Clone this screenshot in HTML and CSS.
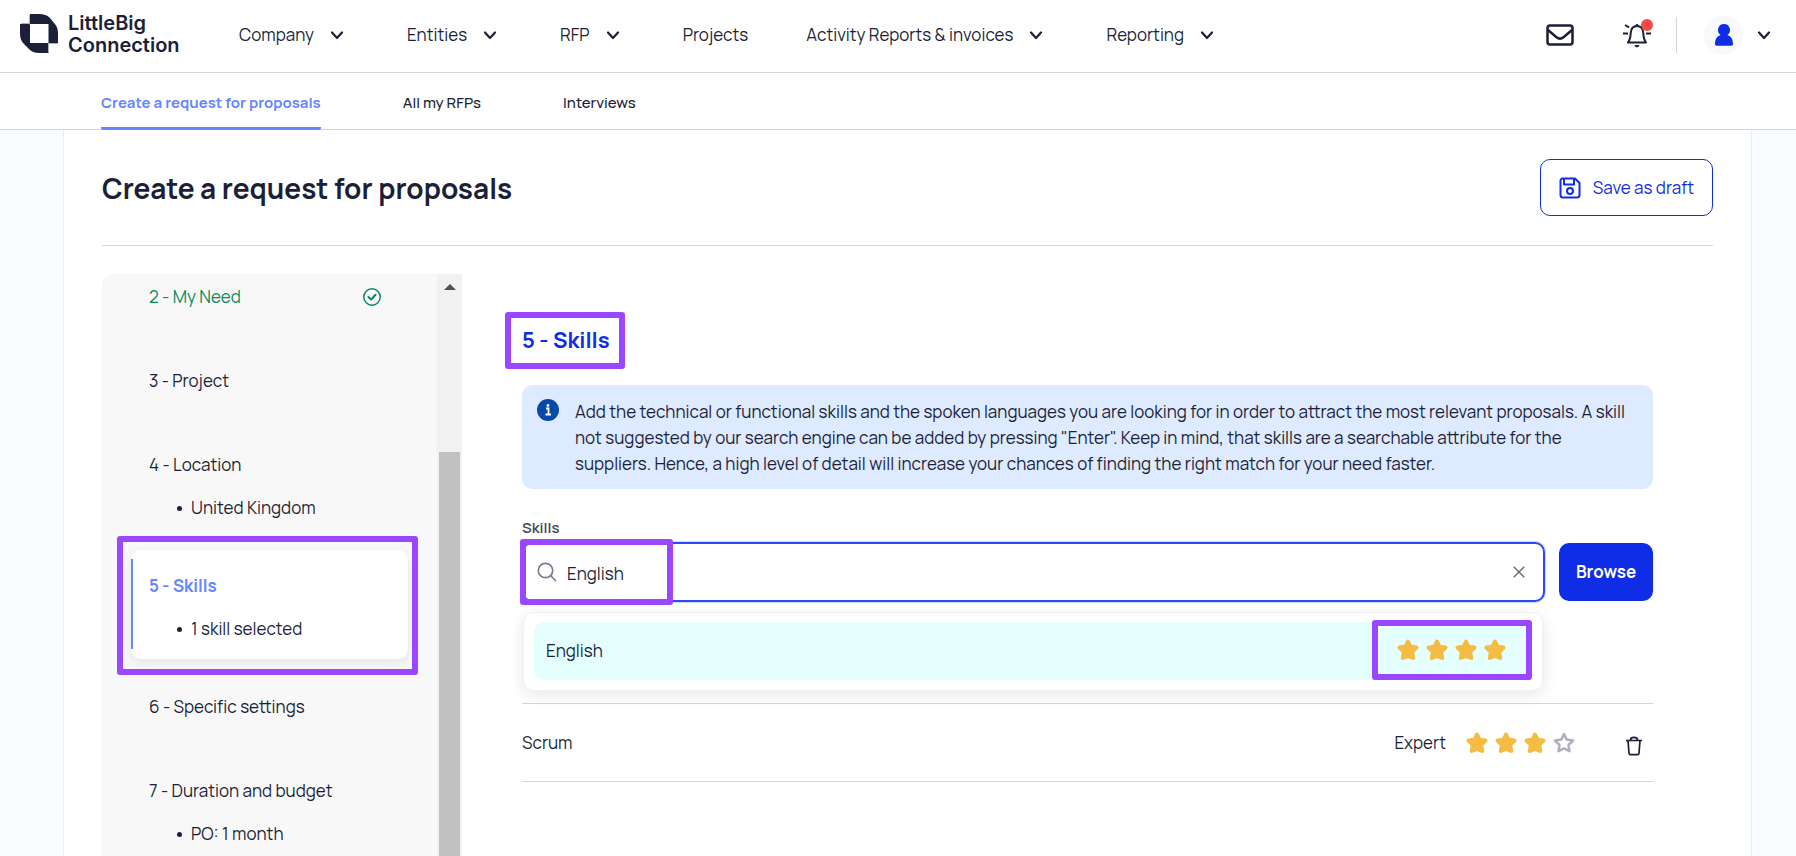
FILE: index.html
```html
<!DOCTYPE html>
<html lang="en">

<head>
    <meta charset="UTF-8">
    <meta name="viewport" content="width=device-width, initial-scale=1.0">
    <title>Create a request for proposals</title>
    <link rel="stylesheet" href="styles.css">
</head>

<body>
    <!-- Shared icons -->
    <svg class="sprite" aria-hidden="true">
        <symbol id="chevron" viewBox="0 0 24 24">
            <path d="M7 9.5l5 5.5 5-5.5" fill="none" stroke="currentColor" stroke-width="2.2" stroke-linecap="round" stroke-linejoin="round" />
        </symbol>
        <symbol id="star" viewBox="0 0 22 22">
            <path d="M11 2.500l2.500 5.200 6 .9-4.300 4.200 1 6.200-5.200-2-5.200 2 1-6.200-4.300-4.200 6-.9z" stroke="currentColor" stroke-width="4" stroke-linejoin="round" />
        </symbol>
    </svg>

    <header class="header">
        <a href="#" class="logo">
            <svg width="38" height="39" viewBox="0 0 38 39" aria-hidden="true">
                <path fill="#1b1f38" d="M10 0h9c5 0 8 1 11 4l4 5c3 3 4 6 4 11v9h-9v10h-9c-5 0-8-1-11-4l-5-5c-3-3-4-6-4-11v-9h10z" />
                <path fill="#fff" d="M10 10h18.500v19h-18.500z" />
                <path stroke="#aeb0ba" d="M9.500 1v9.500M1 9.500h9M28.500 29v9.500M28.500 29.500h9" />
            </svg>
            <span>LittleBig<br>Connection</span>
        </a>
        <nav class="main-nav">
            <a href="#">Company <svg class="chevron"><use href="#chevron" /></svg></a>
            <a href="#">Entities <svg class="chevron"><use href="#chevron" /></svg></a>
            <a href="#">RFP <svg class="chevron"><use href="#chevron" /></svg></a>
            <a href="#">Projects</a>
            <a href="#">Activity Reports &amp; invoices <svg class="chevron"><use href="#chevron" /></svg></a>
            <a href="#">Reporting <svg class="chevron"><use href="#chevron" /></svg></a>
        </nav>
        <div class="header-tools">
            <button type="button" aria-label="Messages">
                <svg width="28" height="22" viewBox="0 0 28 22" fill="none" stroke="#1b1f38" stroke-width="2.500" stroke-linejoin="round">
                    <rect x="1.500" y="1.500" width="25" height="19" rx="2.500" />
                    <path d="M2 6l8.500 7.200c2.300 1.900 4.700 1.900 7 0L26 6" />
                </svg>
            </button>
            <button type="button" class="bell" aria-label="Notifications">
                <svg width="30" height="30" viewBox="0 0 30 30" fill="none" stroke="#1b1f38" stroke-width="2">
                    <path d="M6 22.500c2.500-3 2.500-6 2.700-9.500.3-4.500 2.600-7 6.300-7s6 2.500 6.300 7c.2 3.500.2 6.500 2.700 9.500z" stroke-linejoin="round" />
                    <path d="M1 13.500h5M24 13.500h5M3 5l4 2.300" />
                    <path d="M12.500 25h5c-.5 1.700-1.300 2.300-2.500 2.300s-2-.6-2.500-2.300zM13.500 5.500c0-2 3-2 3 0z" fill="#1b1f38" stroke="none" />
                </svg>
                <span class="dot"></span>
            </button>
            <span class="divider"></span>
            <button type="button" class="account" aria-label="Account">
                <span class="avatar">
                    <svg width="18" height="22" viewBox="0 0 18 22" fill="#0f2ce6" aria-hidden="true">
                        <path d="M9 0a6 6 0 0 1 3.300 11c3.500 1 5.700 4 5.700 9 0 1-.6 1.700-1.700 1.700H1.700C.6 21.700 0 21 0 20c0-5 2.200-8 5.700-9A6 6 0 0 1 9 0z" />
                    </svg>
                </span>
                <svg class="chevron"><use href="#chevron" /></svg>
            </button>
        </div>
    </header>

    <nav class="sub-nav">
        <a href="#" class="active">Create a request for proposals</a>
        <a href="#">All my RFPs</a>
        <a href="#">Interviews</a>
    </nav>

    <main class="panel">
        <div class="panel-header">
            <h1>Create a request for proposals</h1>
            <button type="button" class="save-button">
                <svg width="22" height="22" viewBox="0 0 22 22" fill="none" stroke="currentColor" stroke-width="2" stroke-linejoin="round" aria-hidden="true">
                    <path d="M3.500 1.500h12.500l4.500 4.500v12a2.500 2.500 0 0 1-2.500 2.500H4a2.500 2.500 0 0 1-2.500-2.500V3.500a2 2 0 0 1 2-2z" />
                    <path d="M5 2v5.500h10V2" />
                    <circle cx="11" cy="14" r="3" />
                </svg>
                Save as draft
            </button>
        </div>

        <div class="columns">
            <aside class="steps">
                <ol>
                    <li class="done">
                        <a href="#">2 - My Need</a>
                        <svg width="18" height="18" viewBox="0 0 18 18" fill="none" stroke="currentColor" aria-hidden="true">
                            <circle cx="9" cy="9" r="8.200" stroke-width="1.500" />
                            <path d="M5.500 9l2.700 2.500 4.300-4.700" stroke-width="2" stroke-linecap="round" stroke-linejoin="round" />
                        </svg>
                    </li>
                    <li><a href="#">3 - Project</a></li>
                    <li>
                        <a href="#">4 - Location</a>
                        <p>United Kingdom</p>
                    </li>
                    <li class="current highlight">
                        <a href="#">5 - Skills</a>
                        <p>1 skill selected</p>
                    </li>
                    <li><a href="#">6 - Specific settings</a></li>
                    <li>
                        <a href="#">7 - Duration and budget</a>
                        <p>PO: 1 month</p>
                    </li>
                </ol>
                <div class="scrollbar">
                    <span class="arrow"></span>
                    <span class="thumb"></span>
                </div>
            </aside>

            <section class="skills">
                <h2 class="highlight">5 - Skills</h2>

                <div class="info">
                    <svg width="22" height="22" viewBox="0 0 22 22" aria-hidden="true">
                        <circle cx="11" cy="11" r="11" fill="#0748ab" />
                        <path d="M9 9.500h2.500v6M8.500 15.500h5.500" fill="none" stroke="#fff" stroke-width="1.800" />
                        <circle cx="11" cy="6.500" r="1.400" fill="#fff" />
                    </svg>
                    <p>Add the technical or functional skills and the spoken languages you are looking for in order to attract the most relevant proposals. A skill not suggested by our search engine can be added by pressing "Enter". Keep in mind, that skills are a searchable attribute for the suppliers. Hence, a high level of detail will increase your chances of finding the right match for your need faster.</p>
                </div>

                <label for="skillSearch">Skills</label>
                <div class="search-row">
                    <div class="search">
                        <div class="search-field highlight">
                            <svg width="20" height="20" viewBox="0 0 20 20" fill="none" stroke="#7b7d8c" stroke-width="1.700" aria-hidden="true">
                                <circle cx="8.500" cy="8.500" r="7.200" />
                                <path d="M13.500 13.500l5.500 5.500" />
                            </svg>
                            <input type="text" id="skillSearch" value="English">
                        </div>
                        <button type="button" class="clear" aria-label="Clear">
                            <svg width="12" height="12" viewBox="0 0 12 12" stroke="#6b6e7e" stroke-width="1.500" aria-hidden="true">
                                <path d="M.7.700l10.600 10.600M11.300.700L.7 11.300" />
                            </svg>
                        </button>
                        <div class="suggestions">
                            <div class="option">
                                <span>English</span>
                                <span class="option-rating highlight">
                                    <span class="stars" role="img" aria-label="4 stars">
                                        <svg><use href="#star" /></svg>
                                        <svg><use href="#star" /></svg>
                                        <svg><use href="#star" /></svg>
                                        <svg><use href="#star" /></svg>
                                    </span>
                                </span>
                            </div>
                        </div>
                    </div>
                    <button type="button" class="browse">Browse</button>
                </div>

                <ul class="skill-list">
                    <li>
                        <span class="skill-name">Scrum</span>
                        <span>Expert</span>
                        <span class="stars" role="img" aria-label="3 of 4 stars">
                            <svg><use href="#star" /></svg>
                            <svg><use href="#star" /></svg>
                            <svg><use href="#star" /></svg>
                            <svg class="empty" viewBox="0 0 22 22">
                                <path d="M11 2l2.700 5.600 6.300.9-4.500 4.400 1 6.300-5.500-2.800-5.500 2.800 1-6.300L2 8.500l6.300-.9z" />
                            </svg>
                        </span>
                        <button type="button" class="delete" aria-label="Delete Scrum">
                            <svg width="16" height="20" viewBox="0 0 16 20" fill="none" stroke="#1b1f38" stroke-width="1.700" stroke-linejoin="round" aria-hidden="true">
                                <path d="M0 4.500h16M2 4.500l1 12.700c.1 1 .6 1.500 1.500 1.500h7c.9 0 1.400-.5 1.500-1.500l1-12.700M4.500 4c0-3.500 7-3.500 7 0" />
                            </svg>
                        </button>
                    </li>
                </ul>
            </section>
        </div>
    </main>
</body>

</html>
```

FILE: styles.css
```css
* {
    box-sizing: border-box;
}

body {
    font-family: Manrope, Inter, sans-serif;
    font-size: 17px;
    line-height: 24px;
    color: #1b1f38;
    margin: 0;
    height: 100vh;
    display: flex;
    flex-direction: column;
    overflow: hidden;
    background-color: #f8fcff;
}

a {
    color: inherit;
    text-decoration: none;
}

button {
    font: inherit;
    color: inherit;
    background: none;
    border: none;
    padding: 0;
    cursor: pointer;
}

svg {
    display: block;
    flex-shrink: 0;
}

h1,
h2,
p,
ol,
ul {
    margin: 0;
    padding: 0;
}

ol,
ul {
    list-style: none;
}

.sprite {
    display: none;
}

.chevron {
    width: 24px;
    height: 24px;
}

/* purple frame drawn over an element */
.highlight {
    position: relative;
}

.highlight::after {
    content: "";
    position: absolute;
    inset: 0;
    border: 6px solid #9b47ff;
    border-radius: 3px;
    pointer-events: none;
}

/* header */
.header {
    display: flex;
    align-items: center;
    height: 73px;
    padding: 0 20px 2px;
    background-color: #fff;
    border-bottom: 1px solid #d5d5d8;
    flex-shrink: 0;
}

.logo {
    display: flex;
    align-items: center;
    gap: 10px;
    width: 219px;
    padding-bottom: 3px;
    font-family: Inter, sans-serif;
    font-size: 20px;
    font-weight: 600;
    line-height: 22px;
}

.main-nav {
    display: flex;
    gap: 58px;
    white-space: nowrap;
}

.main-nav a {
    display: flex;
    align-items: center;
    gap: 11px;
}

.header-tools {
    display: flex;
    align-items: center;
    margin-left: auto;
}

.bell {
    position: relative;
    margin: 0 24px 0 48px;
}

.dot {
    position: absolute;
    top: -1px;
    right: -1px;
    width: 12px;
    height: 12px;
    border-radius: 50%;
    background-color: #f54848;
}

.divider {
    width: 1px;
    height: 36px;
    background-color: #d5d5d8;
}

.account {
    display: flex;
    align-items: center;
    gap: 9px;
    margin-left: 27px;
}

.avatar {
    display: flex;
    align-items: center;
    justify-content: center;
    width: 39px;
    height: 39px;
    border-radius: 50%;
    background-color: #f7f9fa;
}

/* sub navigation */
.sub-nav {
    display: flex;
    gap: 82px;
    height: 57px;
    padding: 0 101px;
    background-color: #fff;
    border-bottom: 1px solid #d5d5d8;
    font-size: 15px;
    font-weight: 500;
    flex-shrink: 0;
}

.sub-nav a {
    display: flex;
    align-items: center;
    height: 57px;
    padding-top: 5px;
    border-bottom: 3px solid transparent;
}

.sub-nav .active {
    color: #6685ff;
    font-weight: 700;
    border-color: #6685ff;
    border-radius: 2px;
}

/* panel */
.panel {
    display: flex;
    flex-direction: column;
    flex: 1;
    min-height: 0;
    margin: 0 44px 0 63px;
    padding: 0 38px;
    background-color: #fff;
    border: solid #e9edf2;
    border-width: 0 1px;
}

.panel-header {
    display: flex;
    align-items: center;
    justify-content: space-between;
    padding: 29px 0;
    border-bottom: 1px solid #d5d5d8;
}

h1 {
    font-size: 28px;
    line-height: 36px;
    font-weight: 700;
}

.save-button {
    display: flex;
    align-items: center;
    gap: 12px;
    height: 57px;
    padding: 0 18px;
    color: #0f2ce6;
    border: 1px solid #0f2ce6;
    border-radius: 10px;
}

.columns {
    display: flex;
    flex: 1;
    min-height: 0;
    margin-top: 28px;
}

/* steps */
.steps {
    display: flex;
    width: 360px;
    flex-shrink: 0;
    overflow: hidden;
    background-color: #f8f8f8;
    border-radius: 10px 0 0 0;
}

.steps ol {
    display: flex;
    flex-direction: column;
    gap: 12px;
    flex: 1;
    margin-top: -13px;
    padding: 0 29px;
}

.steps li {
    padding: 24px 18px 18px;
    border-radius: 10px;
}

.steps li:not(:has(p)) {
    padding-bottom: 24px;
}

.steps p {
    display: flex;
    align-items: center;
    gap: 9px;
    margin: 19px 0 0 28px;
}

.steps p::before {
    content: "";
    width: 5px;
    height: 5px;
    border-radius: 50%;
    background-color: #1b1f38;
}

.steps .done {
    display: flex;
    align-items: center;
    justify-content: space-between;
    padding-right: 27px;
    color: #088a5b;
}

.steps .current {
    background-color: #fff;
    box-shadow: 0 4px 12px rgba(27, 31, 56, 0.08);
}

.steps .current a {
    color: #6685ff;
    font-weight: 700;
}

.steps .current::before {
    content: "";
    position: absolute;
    top: 9px;
    bottom: 10px;
    left: 0;
    width: 2px;
    background-color: #6685ff;
}

.steps .current::after {
    inset: -14px -10px -16px -14px;
}

.scrollbar {
    display: flex;
    flex-direction: column;
    width: 25px;
    padding: 10px 2px 0;
    background-color: #f1f1f1;
}

.arrow {
    align-self: center;
    border: 6px solid transparent;
    border-top: none;
    border-bottom-color: #505050;
}

.thumb {
    flex: 1;
    margin-top: 162px;
    background-color: #c1c1c1;
}

/* skills form */
.skills {
    flex: 1;
    padding: 38px 60px 0 43px;
}

h2 {
    width: fit-content;
    margin-bottom: 16px;
    padding: 14px 15px 14px 17px;
    color: #0f2ce6;
    font-size: 22px;
    line-height: 29px;
    font-weight: 700;
}

.info {
    display: flex;
    gap: 16px;
    margin-left: 17px;
    padding: 14px 15px 12px;
    background-color: #deeaff;
    border-radius: 10px;
}

.info p {
    line-height: 26px;
}

.skills label {
    display: block;
    margin: 29px 0 4px 17px;
    color: #454860;
    font-size: 15px;
    line-height: 20px;
    font-weight: 600;
}

.search-row {
    display: flex;
    align-items: center;
    gap: 14px;
    margin-left: 17px;
}

.search {
    position: relative;
    display: flex;
    align-items: center;
    flex: 1;
    height: 60px;
    padding-right: 18px;
    background-color: #fff;
    border: 2px solid #2c47ff;
    border-radius: 10px;
    box-shadow: 0 0 0 1px #d0d8ff;
}

.search-field {
    display: flex;
    align-items: center;
    gap: 10px;
    width: 153px;
    padding: 14px 13px;
}

.search-field.highlight::after {
    inset: -5px 4px -5px -4px;
}

.search-field input {
    width: 100%;
    height: 28px;
    padding: 3px 0 0;
    border: none;
    outline: none;
    background: none;
    color: inherit;
    font: inherit;
}

.clear {
    margin-left: auto;
}

.suggestions {
    position: absolute;
    top: 68px;
    left: -1px;
    right: 0;
    padding: 9px 10px 10px;
    background-color: #fff;
    border: 1px solid #f0f0f2;
    border-radius: 10px;
    box-shadow: 0 4px 16px rgba(27, 31, 56, 0.1);
}

.option {
    display: flex;
    align-items: center;
    justify-content: space-between;
    padding-left: 12px;
    background-color: #e5ffff;
    border-radius: 10px;
}

.option-rating {
    padding: 17px 26px 19px 25px;
}

.option-rating::after {
    inset: -2px 0 0;
}

.stars {
    display: flex;
    gap: 7px;
    color: #f4bc42;
}

.stars svg {
    width: 22px;
    height: 22px;
    fill: currentColor;
}

.stars .empty {
    fill: none;
    stroke: #b0b0bb;
    stroke-width: 2.5;
    stroke-linejoin: round;
}

.browse {
    width: 94px;
    height: 58px;
    color: #fff;
    background-color: #0f2ce6;
    border-radius: 10px;
    font-weight: 700;
}

.skill-list {
    margin: 101px 0 0 17px;
    border-top: 1px solid #d5d5d8;
}

.skill-list li {
    display: flex;
    align-items: center;
    height: 78px;
    padding-right: 11px;
    border-bottom: 1px solid #d5d5d8;
}

.skill-name {
    flex: 1;
}

.skill-list .stars {
    margin: 0 51px 0 20px;
}

.delete {
    padding-top: 7px;
}
```
